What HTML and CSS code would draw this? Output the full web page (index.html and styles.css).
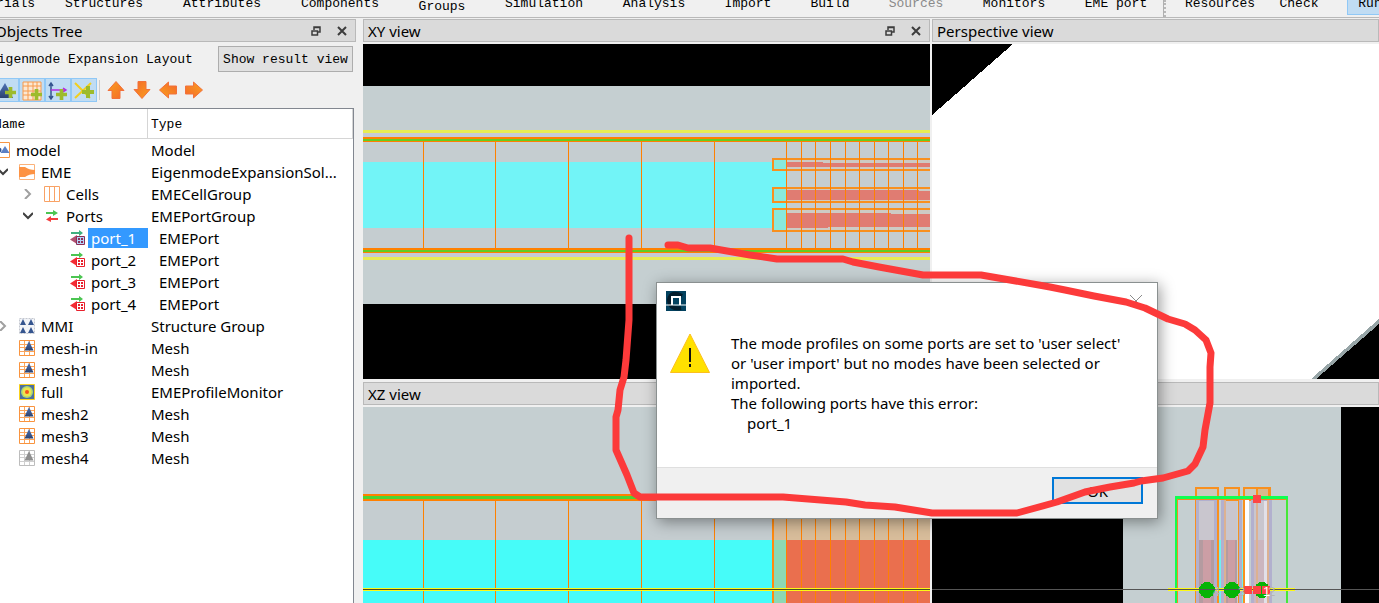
FILE: index.html
```
<!DOCTYPE html>
<html lang="en">

<head>
    <meta charset="utf-8">
    <title>Eigenmode Expansion Layout</title>
    <link rel="stylesheet" href="styles.css">
</head>

<body>
    <!-- shared icons -->
    <svg class="defs" width="0" height="0">
        <linearGradient id="orange" x1="0" y1="0" x2="1" y2="1">
            <stop offset="0" stop-color="#f9a11f" />
            <stop offset="1" stop-color="#f4682a" />
        </linearGradient>
        <linearGradient id="blue" x1="0" y1="0" x2="0" y2="1">
            <stop offset="0" stop-color="#4f73b4" />
            <stop offset="1" stop-color="#2b4270" />
        </linearGradient>
        <symbol id="float" viewBox="0 0 10 10">
            <path d="M3 4V1h6v5H7M3 1.500h6" fill="none" stroke="#3c3c3c" stroke-width="1.500" />
            <path d="M1 5h5.500v4H1zM1 5h6" fill="#dadada" stroke="#3c3c3c" stroke-width="1.500" />
        </symbol>
        <symbol id="close" viewBox="0 0 10 10">
            <path d="M1 1l8 8M9 1L1 9" stroke="#3c3c3c" stroke-width="2" />
        </symbol>
        <symbol id="arrow" viewBox="0 0 18 18">
            <path d="M9 .5L17 9.500h-4v8H5v-8H1z" fill="url(#orange)" stroke="#f2713c" />
        </symbol>
        <symbol id="plus" viewBox="0 0 12 12">
            <path d="M4 0h4v4h4v4H8v4H4V8H0V4h4z" fill="#9dbb2c" />
        </symbol>
        <symbol id="open" viewBox="0 0 10 10">
            <path d="M0 2l5 5 5-5" fill="none" stroke="#404040" stroke-width="2" />
        </symbol>
        <symbol id="closed" viewBox="0 0 10 10">
            <path d="M2 0l5 5-5 5" fill="none" stroke="#a0a0a0" stroke-width="2" />
        </symbol>
        <symbol id="model" viewBox="0 0 16 16">
            <path d="M.5.5h15v15H.5z" fill="#fff" stroke="#f79646" />
            <path d="M6.500 11l4.500-7 4.500 7z" fill="#5b80c4" />
            <circle cx="5" cy="8" r="2.500" fill="#2f5597" />
        </symbol>
        <symbol id="eme" viewBox="0 0 16 16">
            <path d="M.5.5h15v15H.5z" fill="#fff" stroke="#fbb27a" />
            <path d="M0 3h6q4 3 10 3v4q-6 0-10 3H0z" fill="#fd9344" />
        </symbol>
        <symbol id="cells" viewBox="0 0 16 16">
            <path d="M.5.5h15v15H.5zM5.500 0v16M10.500 0v16" fill="#fff" stroke="#f9a265" />
        </symbol>
        <symbol id="ports" viewBox="0 0 16 16">
            <path d="M2 4h7V2l5 3-5 3V6H2z" fill="#4cc552" />
            <path d="M14 10H7V8l-5 3.500L7 14v-2h7z" fill="#f43e3e" />
        </symbol>
        <symbol id="port" viewBox="0 0 16 16">
            <path d="M2 2h8V0l4 3-4 3V4H2z" fill="#4cc552" />
            <path d="M8 5v9L1 9.500z" fill="#f42c34" />
            <path d="M7.500 6.500h8v8h-8z" fill="#fff" stroke="#e8202c" />
            <path d="M9 8h2v2H9zM12 8h2v2h-2zM9 11h2v2H9zM12 11h2v2h-2z" fill="#e8202c" />
        </symbol>
        <symbol id="portsel" viewBox="0 0 16 16">
            <path d="M2 2h8V0l4 3-4 3V4H2z" fill="#40b080" />
            <path d="M8 5v9L1 9.500z" fill="#b05070" />
            <path d="M7.500 6.500h8v8h-8z" fill="#b4d4fa" stroke="#8c3058" />
            <path d="M9 8h2v2H9zM12 8h2v2h-2zM9 11h2v2H9zM12 11h2v2h-2z" fill="#8c3058" />
        </symbol>
        <symbol id="group" viewBox="0 0 16 16">
            <path d="M.5.5h15v15H.5z" fill="#f2f4f8" stroke="#c4c8d0" stroke-dasharray="2 1" />
            <path d="M1 7l3-6 3 6zM9 7l3-6 3 6zM1 15l3-6 3 6zM9 15l3-6 3 6z" fill="#35558f" />
        </symbol>
        <symbol id="mesh" viewBox="0 0 16 16">
            <path d="M.5.5h15v15H.5z" fill="#fff" stroke="#f9943f" />
            <path d="M5.500 1v14M10.500 1v14M1 4.500h14M1 7.500h14M1 11.500h14" stroke="#fba55c" />
            <path d="M5.500 10.500L10 1l4.500 9.500z" fill="url(#blue)" />
        </symbol>
        <symbol id="meshoff" viewBox="0 0 16 16">
            <path d="M.5.5h15v15H.5z" fill="#fff" stroke="#bdbdbd" />
            <path d="M5.500 1v14M10.500 1v14M1 4.500h14M1 7.500h14M1 11.500h14" stroke="#cfcfcf" />
            <path d="M5.500 10.500L10 1l4.500 9.500z" fill="#8e8e8e" />
        </symbol>
        <symbol id="profile" viewBox="0 0 16 16">
            <path d="M.5.5h15v15H.5z" fill="#4d6fa0" stroke="#fbd11c" />
            <circle cx="8" cy="8" r="6" fill="#a8d878" />
            <circle cx="8" cy="8" r="4.500" fill="#f0e44c" />
            <circle cx="8" cy="8" r="2" fill="#f4551c" />
        </symbol>
    </svg>

    <div class="toolbar">
        <button class="tool w9">Materials</button>
        <button class="tool w10">Structures</button>
        <button class="tool w10">Attributes</button>
        <button class="tool w10">Components</button>
        <button class="tool w6 low">Groups</button>
        <button class="tool w10">Simulation</button>
        <button class="tool w8">Analysis</button>
        <button class="tool w6">Import</button>
        <button class="tool w5">Build</button>
        <button class="tool w7" disabled>Sources</button>
        <button class="tool w8">Monitors</button>
        <button class="tool w8">EME port</button>
        <span class="handle"></span>
        <button class="tool resources">Resources</button>
        <button class="tool check">Check</button>
        <button class="tool run">Run</button>
    </div>

    <div class="workspace">
        <div class="dock">
            <div class="title-bar">
                <span class="title">Objects Tree</span>
                <button class="mini" aria-label="Float"><svg><use href="#float" /></svg></button>
                <button class="mini" aria-label="Close"><svg><use href="#close" /></svg></button>
            </div>

            <div class="mode">
                <span>Eigenmode Expansion Layout</span>
                <button class="result">Show result view</button>
            </div>

            <div class="edit-bar">
                <button class="add" aria-label="Add structure"><svg viewBox="0 0 20 20">
                        <path d="M0 17L9 2l8 15z" fill="url(#blue)" />
                        <use href="#plus" x="9" y="6" width="11" height="11" />
                    </svg></button>
                <button class="add" aria-label="Add mesh"><svg viewBox="0 0 20 20">
                        <path d="M1 1h18v18H1zM6 1v18M11 1v18M15 1v18M1 5h18M1 10h18M1 14h18" fill="#fbe8d4" stroke="#f79a4c" />
                        <use href="#plus" x="9" y="8" width="11" height="11" />
                    </svg></button>
                <button class="add" aria-label="Add monitor"><svg viewBox="0 0 20 20">
                        <path d="M3 2v15M1 5l2-3 2 3M1 15l2 3 2-3" fill="none" stroke="#35558f" stroke-width="1.500" />
                        <path d="M3 9h15M15 7l3 2-3 2" fill="none" stroke="#b52be0" stroke-width="1.500" />
                        <use href="#plus" x="8" y="8" width="11" height="11" />
                    </svg></button>
                <button class="add" aria-label="Add axis"><svg viewBox="0 0 20 20">
                        <path d="M1 2l15 15M17 2L1 17" stroke="#f2cf1d" stroke-width="2" />
                        <use href="#plus" x="8" y="5" width="12" height="12" />
                    </svg></button>
                <span class="divider"></span>
                <button class="move" aria-label="Move up"><svg><use href="#arrow" /></svg></button>
                <button class="move down" aria-label="Move down"><svg><use href="#arrow" /></svg></button>
                <button class="move left" aria-label="Move left"><svg><use href="#arrow" /></svg></button>
                <button class="move right" aria-label="Move right"><svg><use href="#arrow" /></svg></button>
            </div>

            <div class="tree-box">
                <table class="tree">
                    <thead>
                        <tr><th class="name-col">Name</th><th>Type</th></tr>
                    </thead>
                    <tbody>
                        <tr><td><div class="node"><svg class="icon"><use href="#model" /></svg><span>model</span></div></td><td>Model</td></tr>
                        <tr><td><div class="node"><svg class="twig"><use href="#open" /></svg><svg class="icon"><use href="#eme" /></svg><span>EME</span></div></td><td>EigenmodeExpansionSol...</td></tr>
                        <tr><td><div class="node depth2"><svg class="twig"><use href="#closed" /></svg><svg class="icon"><use href="#cells" /></svg><span>Cells</span></div></td><td>EMECellGroup</td></tr>
                        <tr><td><div class="node depth2"><svg class="twig"><use href="#open" /></svg><svg class="icon"><use href="#ports" /></svg><span>Ports</span></div></td><td>EMEPortGroup</td></tr>
                        <tr class="port"><td><div class="node depth3"><svg class="icon"><use href="#portsel" /></svg><span class="selected">port_1</span></div></td><td>EMEPort</td></tr>
                        <tr class="port"><td><div class="node depth3"><svg class="icon"><use href="#port" /></svg><span>port_2</span></div></td><td>EMEPort</td></tr>
                        <tr class="port"><td><div class="node depth3"><svg class="icon"><use href="#port" /></svg><span>port_3</span></div></td><td>EMEPort</td></tr>
                        <tr class="port"><td><div class="node depth3"><svg class="icon"><use href="#port" /></svg><span>port_4</span></div></td><td>EMEPort</td></tr>
                        <tr><td><div class="node"><svg class="twig"><use href="#closed" /></svg><svg class="icon"><use href="#group" /></svg><span>MMI</span></div></td><td>Structure Group</td></tr>
                        <tr><td><div class="node depth1"><svg class="icon"><use href="#mesh" /></svg><span>mesh-in</span></div></td><td>Mesh</td></tr>
                        <tr><td><div class="node depth1"><svg class="icon"><use href="#mesh" /></svg><span>mesh1</span></div></td><td>Mesh</td></tr>
                        <tr><td><div class="node depth1"><svg class="icon"><use href="#profile" /></svg><span>full</span></div></td><td>EMEProfileMonitor</td></tr>
                        <tr><td><div class="node depth1"><svg class="icon"><use href="#mesh" /></svg><span>mesh2</span></div></td><td>Mesh</td></tr>
                        <tr><td><div class="node depth1"><svg class="icon"><use href="#mesh" /></svg><span>mesh3</span></div></td><td>Mesh</td></tr>
                        <tr><td><div class="node depth1"><svg class="icon"><use href="#meshoff" /></svg><span>mesh4</span></div></td><td>Mesh</td></tr>
                    </tbody>
                </table>
            </div>
        </div>

        <div class="views">
            <div class="view">
                <div class="title-bar">
                    <span class="title">XY view</span>
                    <button class="mini" aria-label="Float"><svg><use href="#float" /></svg></button>
                    <button class="mini" aria-label="Close"><svg><use href="#close" /></svg></button>
                </div>
                <svg class="scene" viewBox="363 44 567 335" preserveAspectRatio="xMinYMin slice" shape-rendering="crispEdges">
                    <path d="M363 86h567v218H363z" fill="#c5cfd1" />
                    <path d="M363 133h567v124H363z" fill="#c5cdd0" />
                    <path d="M363 133h567v4H363zM363 253h567v4H363z" fill="#c6cbd5" />
                    <path d="M363 130h567v3H363zM363 257h567v3H363z" fill="#e8ec53" />
                    <path d="M363 162h423v66H363z" fill="#72f4f7" />
                    <path d="M774 159h12v11h-12zM774 188h12v14h-12zM774 209h12v22h-12z" fill="#88e8dc" />
                    <path d="M786 159h144v11H786zM786 188h144v14H786zM786 209h144v22H786z" fill="#cdcbc4" />
                    <path d="M786 162h37v1h107v4H786zM786 190h133v1h11v9H786zM786 213h105v1h39v13H828v1h-42z" fill="#e07c72" />
                    <path d="M930 159H773v11h157M930 188H773v14h157M930 209H773v22h157" fill="none" stroke="#f8901f" stroke-width="2" />
                    <path d="M423.500 142v106M495.500 142v106M568.500 142v106M641.500 142v106M714.500 142v106M786.500 142v106M801.500 142v106M815.500 142v106M830.500 142v106M845.500 142v106M859.500 142v106M874.500 142v106M888.500 142v106M903.500 142v106M917.500 142v106" stroke="#ff8000" />
                    <path d="M363 137h567v5H363zM363 248h567v5H363z" fill="#ff8000" />
                    <path d="M363 139h567v2H363zM363 250h567v2H363z" fill="#62cc22" />
                </svg>
            </div>

            <div class="view">
                <div class="title-bar"><span class="title">Perspective view</span></div>
                <svg class="scene" viewBox="932 44 447 335" preserveAspectRatio="xMinYMin slice" shape-rendering="crispEdges">
                    <path d="M932 44h447v335H932z" fill="#fff" />
                    <path d="M932 44h81l-81 71z" />
                    <path d="M1311 379l68-60v60z" fill="#97a5a7" />
                    <path d="M1316 379l63-55v55z" />
                </svg>
            </div>

            <div class="view">
                <div class="title-bar"><span class="title">XZ view</span></div>
                <svg class="scene" viewBox="363 407 567 196" preserveAspectRatio="xMinYMin slice" shape-rendering="crispEdges">
                    <path d="M363 407h567v196H363z" fill="#c5cfd1" />
                    <path d="M363 501h411v39H363z" fill="#c5cdd0" />
                    <path d="M774 488h156v52H774z" fill="#d8bd9b" />
                    <path d="M363 540h411v63H363z" fill="#46fcf9" />
                    <path d="M774 540h12v63h-12z" fill="#8cd8b4" />
                    <path d="M786 540h144v63H786z" fill="#ea6f4e" />
                    <path d="M363 494h567v7H363z" fill="#ff8000" />
                    <path d="M363 496h567v3H363z" fill="#4cd432" />
                    <path d="M772 501h2v102h-2z" fill="#ff8a10" />
                    <path d="M423.500 501v102M495.500 501v102M568.500 501v102M641.500 501v102M714.500 501v102M786.500 501v102M801.500 501v102M815.500 501v102M830.500 501v102M845.500 501v102M859.500 501v102M874.500 501v102M888.500 501v102M903.500 501v102M917.500 501v102" stroke="#ff8000" />
                    <path d="M363 588h567v3H363z" fill="#fdf915" />
                    <path d="M363 589h567v1H363z" fill="#4a4a28" />
                </svg>
            </div>

            <div class="view">
                <div class="title-bar"><span class="title"></span></div>
                <svg class="scene" viewBox="932 407 447 196" preserveAspectRatio="xMinYMin slice" shape-rendering="crispEdges">
                    <path d="M1123 407h218v196h-218z" fill="#c5cfd1" />
                    <!-- port frames -->
                    <path d="M1196 488h22v12h-22zM1225 488h14v12h-14zM1244 488h26v12h-26z" fill="#cdc9bd" stroke="#f8901f" stroke-width="2" />
                    <path d="M1257 488h12v12h-12z" fill="#d8b88c" stroke="#f8901f" stroke-width="2" />
                    <!-- layers -->
                    <path d="M1196 500h21v103h-21zM1221 500h3v103h-3zM1239 500h3v103h-3zM1251 500h21v103h-21z" fill="#b2b0ce" />
                    <path d="M1199 501h15v102h-15zM1226 501h11v102h-11zM1254 501h10v102h-10z" fill="#c9c6ce" />
                    <path d="M1264 501h3v102h-3z" fill="#e2e0e8" />
                    <path d="M1245 500h4v103h-4z" fill="#fff" />
                    <path d="M1219 540h2v63h-2zM1242 540h1v63h-1z" fill="#70f0f0" />
                    <path d="M1199 540h15v63h-15zM1226 540h11v63h-11z" fill="#b49ba0" />
                    <path d="M1203 540h8v63h-8zM1228 540h7v63h-7z" fill="#cc9ea5" />
                    <path d="M1254 540h10v63h-10z" fill="#ccb6bf" />
                    <path d="M1217 500h2v103h-2zM1243 500h2v103h-2zM1195 500h1v103h-1zM1238 500h1v103h-1z" fill="#f8901f" />
                    <path d="M1224 500h2v103h-2zM1256 500h2v103h-2zM1267 500h2v103h-2z" fill="#dcb191" />
                    <!-- solver region -->
                    <path d="M1177.500 603V499.500H1286" fill="none" stroke="#f08a20" />
                    <path d="M1175 603V496h113v3h-111v104z" fill="#10ff50" />
                    <path d="M1286 499h2v104h-2z" fill="#46e838" />
                    <path d="M1168 588h127v3h-127z" fill="#fdf915" />
                    <g fill="#06b406">
                        <circle cx="1207" cy="590" r="8" />
                        <circle cx="1232" cy="590" r="8" />
                        <circle cx="1262" cy="590" r="8" />
                    </g>
                    <path d="M932 589h447v1H932z" fill="#555" />
                    <path d="M1253 495h8v8h-8zM1244 586h8v8h-8zM1253 586h8v8h-8zM1262 586h8v8h-8z" fill="#fd4545" />
                    <g class="marks">
                        <text x="1213" y="596">4</text>
                        <text x="1238" y="596">3</text>
                        <text x="1268" y="596">2</text>
                        <text x="1263" y="596" class="bright">1</text>
                    </g>
                </svg>
            </div>
        </div>
    </div>

    <div class="dialog" role="alertdialog" aria-labelledby="message">
        <div class="dialog-top">
            <svg class="logo" viewBox="0 0 20 20">
                <path d="M0 0h20v20H0z" fill="#03425f" />
                <path d="M16 5Q5-1 3 9q1 10 12 8" fill="none" stroke="#031c2b" stroke-width="4" />
                <path d="M6 14V6h8v8" fill="none" stroke="#fff" stroke-width="2" />
                <path d="M0 14h20" stroke="#fff" />
            </svg>
            <button class="dismiss" aria-label="Close"><svg viewBox="0 0 12 12">
                    <path d="M0 0l12 12M12 0L0 12" stroke="#8a8a8a" />
                </svg></button>
        </div>
        <div class="dialog-body">
            <svg class="warning" viewBox="0 0 40 40">
                <path d="M20 1l19.500 38.500H.5z" fill="#ffe100" stroke="#fcbf1e" />
                <path d="M19 15h2v14h-2zM19 31h2v3h-2z" fill="#111" />
            </svg>
            <div id="message">
                <p>The mode profiles on some ports are set to 'user select' or 'user import' but no modes have been selected or imported.</p>
                <p>The following ports have this error:</p>
                <p class="indent">port_1</p>
            </div>
        </div>
        <div class="dialog-foot">
            <button class="ok">OK</button>
        </div>
    </div>

    <!-- hand-drawn marker -->
    <svg class="marker" viewBox="0 0 1379 603" preserveAspectRatio="xMinYMin">
        <path d="M629 238V320L626 360 624 377 620 390 618 410 616 417V450L627 475 634 493 640 497H783L846 502 865 505 895 507 932 513H1017L1057 502 1085 492 1110 487 1134 483 1141 481 1163 478 1188 471 1195 464 1203 447 1205 430 1210 403V367L1211 353 1206 340 1195 330 1185 324 1168 319 1145 308 1126 302 1094 296 1065 290 1050 287 1010 280 981 275H923L879 267 853 262 843 259H777L750 255 727 251 710 248H688L678 245H668" />
    </svg>
</body>

</html>
```
FILE: styles.css
```
* {
    box-sizing: border-box;
}

body {
    margin: 0;
    height: 100vh;
    display: flex;
    flex-direction: column;
    overflow: hidden;
    position: relative;
    background-color: #f0f0f0;
    color: #000;
    font-family: "Noto Sans", "Open Sans", sans-serif;
    font-size: 15px;
}

button {
    padding: 0;
    border: none;
    background: none;
    color: inherit;
    font: inherit;
}

svg {
    display: block;
}

.defs {
    position: absolute;
}

/* main toolbar, scrolled half out of the window */
.toolbar {
    display: flex;
    align-items: flex-end;
    flex: none;
    height: 18px;
    margin-left: -45px;
    border-bottom: 1px solid #b9b9b9;
    font-family: "Liberation Mono", monospace;
    font-size: 13px;
    line-height: 16px;
    white-space: nowrap;
}

.tool {
    flex: none;
    padding-bottom: 5px;
    text-align: center;
}

.tool:disabled {
    color: #8a8a8a;
}

.low {
    padding-bottom: 2px;
}

.w5 {
    width: 78px;
}

.w6 {
    width: 86px;
}

.w7 {
    width: 94px;
}

.w8 {
    width: 102px;
}

.w9 {
    width: 90px;
}

.w10 {
    width: 118px;
}

.handle {
    align-self: stretch;
    width: 8px;
    margin-right: 18px;
    margin-left: -4px;
    border-left: 1px solid #b0b0b0;
    border-right: 2px dotted #b8b8b8;
}

.resources {
    width: 72px;
    margin-right: 23px;
}

.check {
    width: 40px;
    margin-right: 28px;
}

.run {
    width: 46px;
    padding-bottom: 2px;
    margin-bottom: 2px;
    border: 1px solid #90c8f6;
    background-color: #c0dcf3;
}

.workspace {
    display: flex;
    flex: 1;
    gap: 7px;
    min-height: 0;
    margin: 1px 0 0 -10px;
}

.title-bar {
    display: flex;
    align-items: center;
    flex: none;
    height: 23px;
    padding: 0 8px 0 4px;
    border: 1px solid #b9b9b9;
    background-color: #dadada;
}

.title {
    flex: 1;
}

.mini {
    margin-left: 16px;
}

.mini svg {
    width: 10px;
    height: 10px;
}

/* objects tree */
.dock {
    display: flex;
    flex: none;
    flex-direction: column;
    width: 366px;
}

.mode {
    display: flex;
    align-items: center;
    justify-content: space-between;
    padding: 4px 3px 5px 0;
    font-family: "Liberation Mono", monospace;
    font-size: 13px;
}

.result {
    width: 135px;
    height: 26px;
    border: 1px solid #adadad;
    background-color: #e1e1e1;
}

.edit-bar {
    display: flex;
    align-items: center;
    height: 24px;
    margin: 1px 0 6px 3px;
}

.add {
    width: 26px;
    height: 24px;
    padding: 2px;
    border: 1px solid #90c8f6;
    background-color: #c0dcf3;
}

.add svg {
    width: 20px;
    height: 20px;
}

.divider {
    width: 1px;
    height: 20px;
    margin: 0 3px 0 2px;
    background-color: #ccc;
}

.move {
    width: 26px;
    padding: 4px;
}

.move svg {
    width: 18px;
    height: 18px;
}

.down svg {
    transform: rotate(180deg);
}

.left svg {
    transform: rotate(-90deg);
}

.right svg {
    transform: rotate(90deg);
}

.tree-box {
    flex: 1;
    margin-right: 2px;
    border: 1px solid #828790;
    border-bottom: none;
    background-color: #fff;
}

.tree {
    width: 100%;
    table-layout: fixed;
    border-collapse: separate;
    border-spacing: 0;
}

.tree th {
    height: 30px;
    padding: 2px 0 0 3px;
    border-right: 1px solid #d5d5d5;
    border-bottom: 1px solid #d5d5d5;
    font-family: "Liberation Mono", monospace;
    font-size: 13px;
    font-weight: normal;
    text-align: left;
}

.tree .name-col {
    width: 157px;
}

.tree td {
    height: 22px;
    padding: 0 0 0 3px;
    line-height: 20px;
    white-space: nowrap;
}

.tree .port td + td {
    padding-left: 11px;
}

.tree td:first-child {
    padding: 0;
}

.node {
    display: flex;
    align-items: center;
    padding-left: 3px;
}

.depth1 {
    padding-left: 28px;
}

.depth2 {
    padding-left: 28px;
}

.depth3 {
    padding-left: 78px;
}

.node span {
    flex: 1;
    margin-left: 3px;
    padding-left: 3px;
}

.node .selected {
    background-color: #3399ff;
    color: #fff;
}

.icon {
    flex: none;
    width: 16px;
    height: 16px;
}

.twig {
    flex: none;
    width: 10px;
    height: 10px;
    margin: 0 11px 0 4px;
}

/* drawing views */
.views {
    display: grid;
    flex: 1;
    grid-template-columns: 567fr 447fr;
    grid-template-rows: 360fr 221fr;
    gap: 3px 2px;
    min-width: 0;
}

.view {
    display: flex;
    flex-direction: column;
    gap: 2px;
    min-width: 0;
    min-height: 0;
}

.scene {
    flex: 1;
    width: 100%;
    min-height: 0;
    background-color: #000;
}

.marks {
    font-family: "Liberation Sans", sans-serif;
    font-size: 13px;
    fill: #b4b4b4;
}

.marks .bright {
    fill: #fff;
}

/* error dialog */
.dialog {
    position: absolute;
    top: 282px;
    left: 656px;
    width: 502px;
    border: 1px solid #8a9090;
    background-color: #fff;
    box-shadow: 2px 3px 14px rgba(0, 0, 0, 0.4);
}

.dialog-top {
    display: flex;
    align-items: flex-start;
    justify-content: space-between;
    padding: 8px 15px 0 9px;
}

.logo {
    width: 20px;
    height: 20px;
}

.dismiss {
    margin-top: 4px;
}

.dismiss svg {
    width: 12px;
    height: 12px;
}

.dialog-body {
    display: flex;
    gap: 21px;
    height: 156px;
    padding: 22px 26px 0 13px;
    line-height: 20px;
}

.dialog-body p {
    margin: 0;
}

.dialog-body .indent {
    padding-left: 16px;
}

.warning {
    flex: none;
    width: 40px;
    height: 40px;
}

.dialog-foot {
    display: flex;
    justify-content: flex-end;
    padding: 9px 14px 14px;
    border-top: 1px solid #dfdfdf;
    background-color: #f0f0f0;
}

.ok {
    width: 91px;
    height: 27px;
    border: 2px solid #0078d7;
    background-color: #e1e1e1;
}

.marker {
    position: absolute;
    top: 0;
    left: 0;
    width: 100%;
    pointer-events: none;
}

.marker path {
    fill: none;
    stroke: #fc3a3a;
    stroke-width: 7px;
    stroke-linecap: round;
    stroke-linejoin: round;
}
```
